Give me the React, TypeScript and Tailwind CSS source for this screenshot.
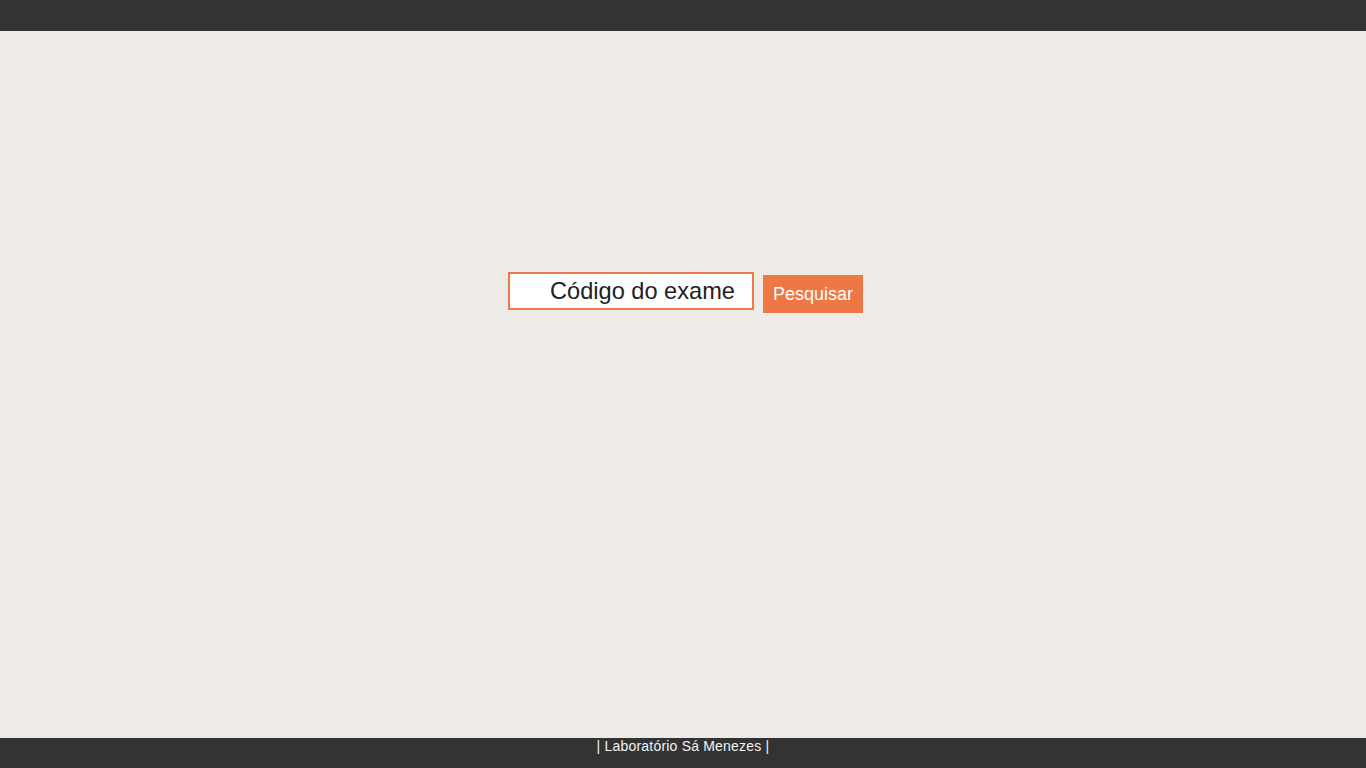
import React from "react";

export default function App() {
  return (
    <div className="flex h-[768px] w-full flex-col bg-[#eeebe6] font-['Liberation_Sans',Arial,sans-serif]">
      <header className="h-[31px] w-full shrink-0 bg-[#333333]" />
      <main className="flex flex-1 items-start justify-center pt-[241px]">
        <div className="ml-[5px] flex items-start gap-[9px]">
          <input
            type="text"
            placeholder="Código do exame"
            className="h-[38px] w-[246px] border-2 border-[#ef7848] bg-white pl-[40px] pr-2 text-[23.6px] text-[#222222] outline-none placeholder:text-[#222222]"
          />
          <button className="mt-[3px] h-[38px] w-[100px] bg-[#ef7645] text-[18px] text-white">
            Pesquisar
          </button>
        </div>
      </main>
      <footer className="h-[30px] w-full shrink-0 bg-[#333333] text-center text-[14px] leading-[16px] tracking-[0.2px] text-[#f2f2f2]">
        | Laboratório Sá Menezes |
      </footer>
    </div>
  );
}
